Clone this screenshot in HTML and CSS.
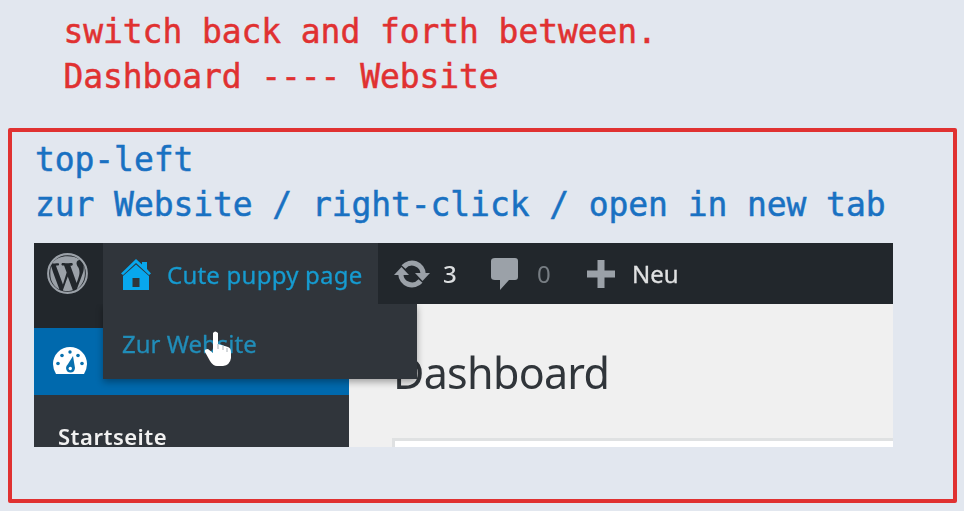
FILE: index.html
```html
<!DOCTYPE html>
<html lang="en">
<head>
<meta charset="utf-8">
<title>Dashboard and website</title>
<link rel="stylesheet" href="styles.css">
</head>
<body>
<p class="note note-red">switch back and forth between.<br>Dashboard ---- Website</p>
<section class="frame">
  <p class="note note-blue">top-left<br>zur Website / right-click / open in new tab</p>
  <div class="shot">
    <div class="adminbar">
      <svg class="wp" viewBox="0 0 20 20"><circle cx="10" cy="10" r="9.45" fill="none" stroke="currentColor" stroke-width="1"/><path fill="currentColor" d="M7.78 15.37L4.37 6.22c.55-.02 1.17-.08 1.17-.08.5-.06.44-1.13-.06-1.11 0 0-1.45.11-2.37.11-.18 0-.37 0-.58-.01C4.12 2.69 6.87 1.61 10 1.61c2.33 0 4.45.47 6.05 1.84-.68-.11-1.65.39-1.65 1.58 0 .74.45 1.36.9 2.1.35.61.55 1.36.55 2.46 0 1.49-1.4 5-1.4 5l-3.03-8.37c.54-.02.82-.17.82-.17.5-.05.44-1.25-.06-1.22 0 0-1.44.12-2.38.12-.87 0-2.33-.12-2.33-.12-.5-.03-.56 1.2-.06 1.22l.92.08 1.26 3.41zM17.41 10c.24-.64.74-1.87.43-4.25.5 1.29.65 2.71.65 4.25 0 3.29-1.53 5.94-4 7.78.97-2.59 1.94-5.2 2.92-7.78zM6.1 17.8C3.12 16.35 1.61 13.53 1.61 10c0-1.3.03-2.48.42-3.59C3.25 10.3 4.67 13.9 6.1 17.8zm4.03-6.34l2.48 6.68c-.86.29-1.66.35-2.61.35-.79 0-1.57-.01-2.29-.23.81-2.38 1.62-4.54 2.42-6.8z"/></svg>
      <div class="site">
        <svg class="home" viewBox="0 0 30 32"><path fill-rule="evenodd" d="M15 5.500 28 17v14H2V17zM11.500 19v9h7v-9z"/><path d="M15 0l6 5.500V3h5v7l4 4.500-2 1.500L15 4 2 16l-2-1.500z"/></svg>
        <span class="site-name">Cute puppy page</span>
      </div>
      <svg class="updates" viewBox="0 0 36 28"><g fill="none" stroke="currentColor" stroke-width="5.200"><path d="M9.500 7A11.200 11.200 0 0 1 29.200 14"/><path d="M26.500 21A11.200 11.200 0 0 1 6.800 14"/></g><path fill="currentColor" d="M21 13h15l-7.500 8zM0 15h15L7.500 7z"/></svg>
      <span class="count">3</span>
      <svg class="bubble" viewBox="0 0 28 34"><path d="M4 1h20q3 0 3 3v16q0 3-3 3h-6L9 33V23H4q-4 0-4-3V4q0-3 4-3z"/></svg>
      <span class="zero">0</span>
      <svg class="plus" viewBox="0 0 28 28"><path d="M10.500 0h7v10.500H28v7H17.500V28h-7V17.500H0v-7h10.500z"/></svg>
      <span class="new">Neu</span>
    </div>
    <div class="body">
      <div class="sidebar">
        <div class="current"><svg class="gauge" viewBox="0 0 34 28"><path fill="#fff" d="M3 27Q0 22 0 17a17 17 0 0 1 34 0q0 5-3 10z"/><g fill="#0870ae"><circle cx="17" cy="5" r="1.700"/><circle cx="9" cy="8.500" r="1.800"/><circle cx="25" cy="8.500" r="1.800"/><circle cx="5" cy="16.500" r="1.800"/><circle cx="29" cy="16.500" r="1.800"/><path d="M20 9l2 12q-.5 4.500-4.500 4.500T13 21q0-2 2-4z"/></g><circle cx="17.300" cy="21.500" r="1.700" fill="#fff"/></svg></div>
        <div class="start">Startseite</div>
      </div>
      <div class="page"><h1>Dashboard</h1><div class="panel"></div></div>
    </div>
    <div class="menu"><span>Zur Website</span></div>
    <svg class="hand" viewBox="0 0 28 36"><path fill="#fff" d="M9 2q2-3 5 0v11l10 3q3 1 3 5v6q-1 7-8 8h-6q-4 0-7-5L1 21q-1-3 3-3l5 4z"/><path fill="none" stroke="#aab1b7" stroke-width="1" d="M14 13v5m5-3v4m4-2v4"/></svg>
  </div>
</section>
</body>
</html>
```
FILE: styles.css
```css
* { box-sizing: border-box; }
body { margin: 0; width: 964px; height: 511px; overflow: hidden; background: #e2e7ef; padding: 8px 7px 8px 8px; }
p, h1 { margin: 0; }
.note { font: 33px/45px "DejaVu Sans Mono", monospace; letter-spacing: -0.09px; white-space: nowrap; -webkit-text-stroke: .5px currentColor; }
.note-red { color: #e03131; padding-left: 55.5px; padding-top: 1px; height: 120px; }
.note-blue { color: #1971c2; padding-left: 23px; height: 111px; padding-top: 5px; }
.frame { height: 375px; border: 4px solid #e03131; border-radius: 2px; }
.shot { position: relative; width: 859px; height: 204px; margin-left: 22px; overflow: hidden; background: #f0f0f0; font-family: "Noto Sans", sans-serif; font-size: 24px; }
.adminbar { position: relative; z-index: 2; height: 61px; display: flex; align-items: center; background: #22272c; color: #9ba1a8; }
svg { display: block; flex: none; fill: currentColor; }
.wp { width: 41px; height: 41px; margin: 0 15px 0 13px; }
.site { width: 275px; height: 61px; display: flex; align-items: center; background: #30353b; color: #169bd0; padding: 2px 0 0 18px; }
.home { width: 30px; height: 32px; margin-right: 16px; color: #08a7ed; }
.site-name { white-space: nowrap; letter-spacing: 0.23px; -webkit-text-stroke: .3px currentColor; }
.updates { width: 36px; height: 28px; margin-left: 16px; }
.count { width: 14px; margin-left: 13px; color: #dcdee0; font-weight: 500; }
.bubble { width: 28px; height: 34px; margin-left: 34px; }
.zero { width: 14px; margin-left: 18px; color: #777d83; }
.plus { width: 28px; height: 28px; margin-left: 36px; }
.new { margin-left: 17px; color: #e0e1e2; -webkit-text-stroke: .3px currentColor; }
.body { height: 143px; display: grid; grid-template-columns: 315px 1fr; }
.sidebar { background: #30353b; padding-top: 24px; box-shadow: inset 0 24px #22272c; }
.current { height: 67px; background: #0069ad; padding: 19px 0 0 19px; }
.gauge { width: 34px; height: 28px; }
.start { color: #f1f1f1; font-weight: 600; font-size: 22px; line-height: 30px; letter-spacing: .5px; padding: 26px 0 0 24px; white-space: nowrap; }
.page { padding: 40px 0 0 43px; }
h1 { height: 94px; padding-left: 1px; color: #30353a; font-size: 43px; line-height: 58px; font-weight: 400; letter-spacing: -.7px; }
.panel { height: 20px; border: 3px solid #dfe1e2; border-right: 0; background: #fff; }
.menu { position: absolute; z-index: 1; left: 69px; top: 61px; width: 314px; height: 75px; padding: 22px 0 0 19px; background: #30353b; color: #218db9; line-height: 36px; box-shadow: 0 3px 7px #0005; -webkit-text-stroke: .3px currentColor; }
.hand { position: absolute; z-index: 2; left: 170px; top: 88px; width: 28px; height: 36px; }
.wp, .home, .updates, .bubble, .plus, .gauge, .hand, .shot span, .start, h1 { filter: blur(.6px); }
```
